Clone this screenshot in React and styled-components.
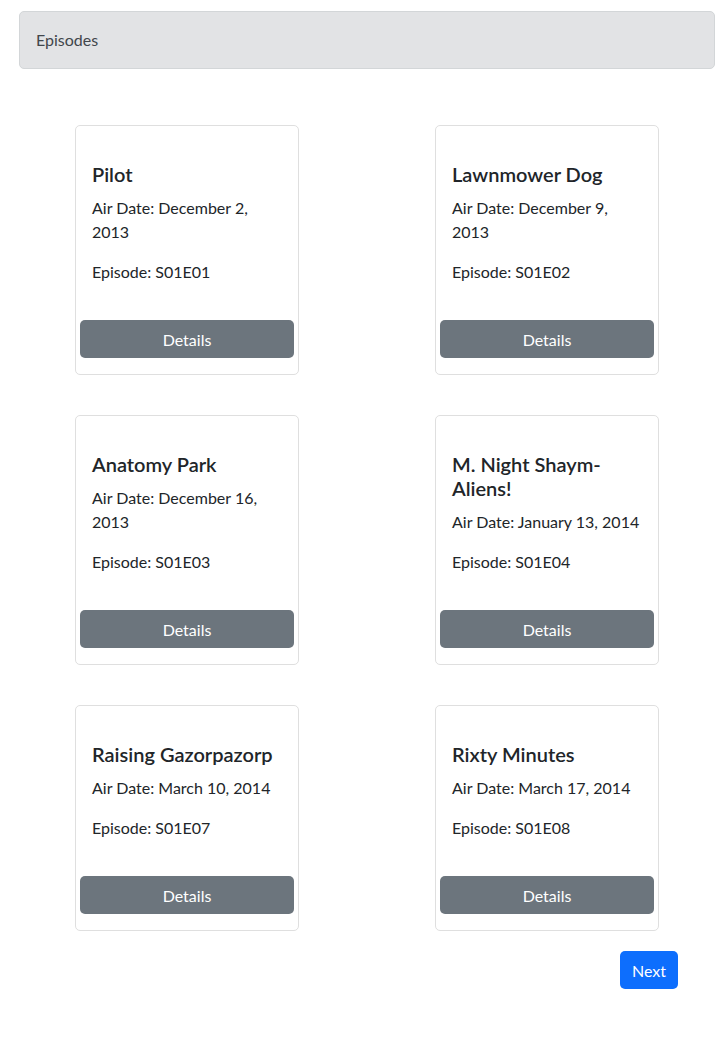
import React from "react";
import styled, { createGlobalStyle } from "styled-components";

const GlobalStyle = createGlobalStyle`
    body {
        margin: 0;
        background: #fff;
        font-family: "Lato", "Noto Sans", sans-serif;
        color: #212529;
        font-size: 16px;
        line-height: 1.5;
    }
`;

const Page = styled.div`
    padding: 11px 7px 0 19px;
`;

const Crumb = styled.div`
    height: 58px;
    box-sizing: border-box;
    padding: 16px;
    background: #e2e3e5;
    border: 1px solid #d3d6d8;
    border-radius: 5px;
    color: #41464b;
`;

const Grid = styled.div`
    display: grid;
    grid-template-columns: 224px 224px;
    column-gap: 136px;
    row-gap: 40px;
    padding: 56px 0 0 56px;
    align-items: start;
`;

const Card = styled.div`
    border: 1px solid #dfdfdf;
    border-radius: 5px;
    background: #fff;
`;

const Body = styled.div`
    padding: 36px 16px 0;
`;

const Title = styled.h5`
    margin: 0 0 10px;
    font-size: 20px;
    font-weight: 600;
    line-height: 24px;
`;

const Text = styled.p`
    margin: 0 0 16px;
    line-height: 24px;
`;

const Footer = styled.div`
    padding: 20px 4px 16px;
`;

const Button = styled.button`
    display: block;
    width: ${props => (props.block ? "100%" : "auto")};
    height: 38px;
    padding: 0 12px;
    border: none;
    border-radius: 5px;
    background: ${props => props.bg};
    color: #fff;
    font-family: inherit;
    font-size: 16px;
`;

const Pager = styled.div`
    display: flex;
    justify-content: flex-end;
    padding: 20px 37px 0 0;
`;

const episodes = [
    { name: "Pilot", date: "December 2, 2013", code: "S01E01" },
    { name: "Lawnmower Dog", date: "December 9, 2013", code: "S01E02" },
    { name: "Anatomy Park", date: "December 16, 2013", code: "S01E03" },
    { name: "M. Night Shaym-Aliens!", date: "January 13, 2014", code: "S01E04" },
    { name: "Raising Gazorpazorp", date: "March 10, 2014", code: "S01E07" },
    { name: "Rixty Minutes", date: "March 17, 2014", code: "S01E08" },
];

const App = () => (
    <>
        <GlobalStyle />
        <Page>
            <Crumb>Episodes</Crumb>
            <Grid>
                {episodes.map(ep => (
                    <Card key={ep.code}>
                        <Body>
                            <Title>{ep.name}</Title>
                            <Text>Air Date: {ep.date}</Text>
                            <Text>Episode: {ep.code}</Text>
                        </Body>
                        <Footer>
                            <Button block bg="#6c757d">Details</Button>
                        </Footer>
                    </Card>
                ))}
            </Grid>
            <Pager>
                <Button bg="#0d6efd">Next</Button>
            </Pager>
        </Page>
    </>
);

export default App;
